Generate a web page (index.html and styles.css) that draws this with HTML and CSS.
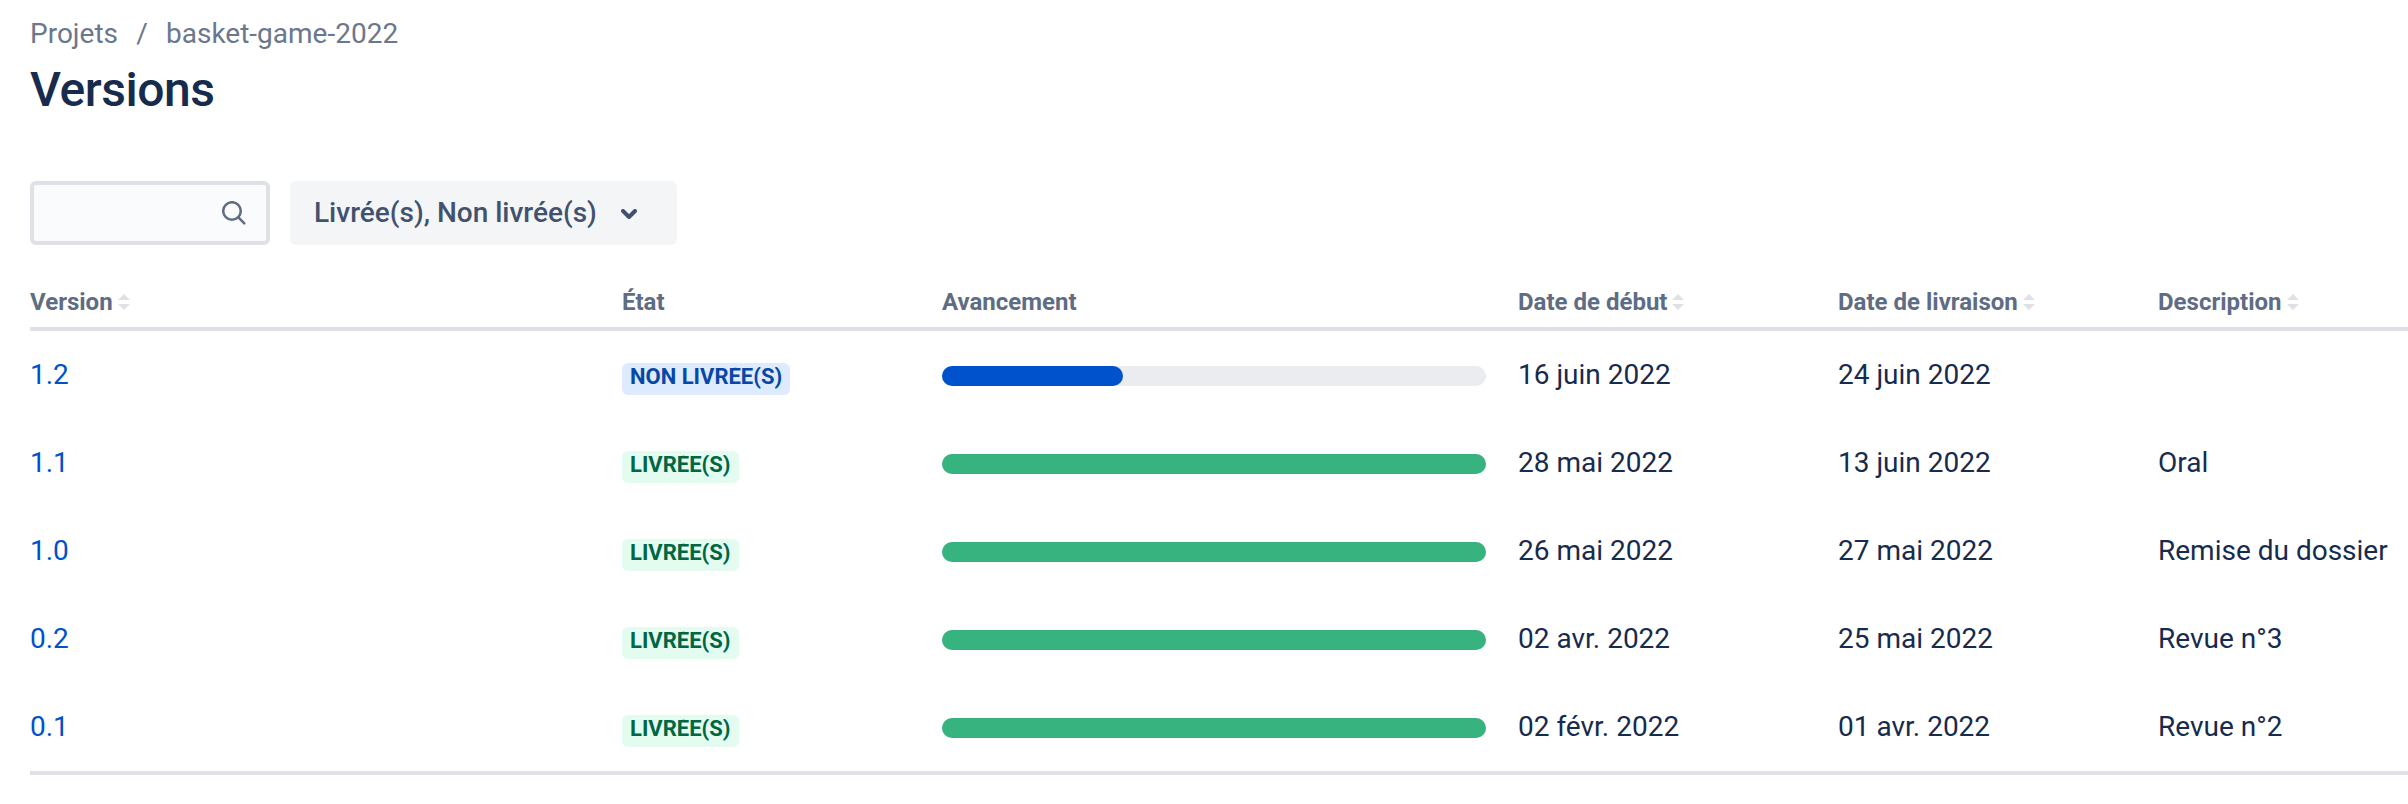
FILE: index.html
```html
<!DOCTYPE html>
<html lang="fr">
<head>
<meta charset="utf-8">
<title>Versions</title>
<link rel="stylesheet" href="styles.css">
</head>
<body>
<main class="page">
  <nav class="breadcrumbs"><span>Projets</span><span class="separator">/</span><span>basket-game-2022</span></nav>
  <h1 class="title">Versions</h1>
  <div class="filters">
    <div class="search">
      <svg class="search-icon" width="24" height="24" viewBox="0 0 24 24"><circle cx="10" cy="10" r="8.8" /><path d="M16.4 16.4 22.3 22.3" /></svg>
    </div>
    <div class="select"><span>Livrée(s), Non livrée(s)</span><svg class="chevron" width="16" height="10" viewBox="0 0 16 10"><path d="M2 2l6 6 6-6" /></svg></div>
  </div>
  <div class="table">
    <div class="row head">
      <div>Version<svg class="sort" width="12" height="16" viewBox="0 0 12 16"><path d="M0 6 6 0l6 6zM0 10h12l-6 6z" /></svg></div>
      <div>État</div>
      <div>Avancement</div>
      <div>Date de début<svg class="sort" width="12" height="16" viewBox="0 0 12 16"><path d="M0 6 6 0l6 6zM0 10h12l-6 6z" /></svg></div>
      <div>Date de livraison<svg class="sort" width="12" height="16" viewBox="0 0 12 16"><path d="M0 6 6 0l6 6zM0 10h12l-6 6z" /></svg></div>
      <div>Description<svg class="sort" width="12" height="16" viewBox="0 0 12 16"><path d="M0 6 6 0l6 6zM0 10h12l-6 6z" /></svg></div>
    </div>
    <div class="row">
      <div><span class="link">1.2</span></div>
      <div><span class="lozenge progress"><span class="lozenge-text">NON LIVRÉE(S)</span></span></div>
      <div><div class="track"><div class="bar current" style="width: 33.33%"></div></div></div>
      <div>16 juin 2022</div><div>24 juin 2022</div><div></div>
    </div>
    <div class="row">
      <div><span class="link">1.1</span></div>
      <div><span class="lozenge"><span class="lozenge-text">LIVRÉE(S)</span></span></div>
      <div><div class="track"><div class="bar" style="width: 100%"></div></div></div>
      <div>28 mai 2022</div><div>13 juin 2022</div><div>Oral</div>
    </div>
    <div class="row">
      <div><span class="link">1.0</span></div>
      <div><span class="lozenge"><span class="lozenge-text">LIVRÉE(S)</span></span></div>
      <div><div class="track"><div class="bar" style="width: 100%"></div></div></div>
      <div>26 mai 2022</div><div>27 mai 2022</div><div>Remise du dossier</div>
    </div>
    <div class="row">
      <div><span class="link">0.2</span></div>
      <div><span class="lozenge"><span class="lozenge-text">LIVRÉE(S)</span></span></div>
      <div><div class="track"><div class="bar" style="width: 100%"></div></div></div>
      <div>02 avr. 2022</div><div>25 mai 2022</div><div>Revue n°3</div>
    </div>
    <div class="row">
      <div><span class="link">0.1</span></div>
      <div><span class="lozenge"><span class="lozenge-text">LIVRÉE(S)</span></span></div>
      <div><div class="track"><div class="bar" style="width: 100%"></div></div></div>
      <div>02 févr. 2022</div><div>01 avr. 2022</div><div>Revue n°2</div>
    </div>
  </div>
</main>
</body>
</html>
```

FILE: styles.css
```css
* { box-sizing: border-box; }
body {
  margin: 0;
  background: #fff;
  color: #172b4d;
  font: 28px/40px Roboto, sans-serif;
  overflow: hidden;
}
.page { padding: 14px 0 0 30px; }
.breadcrumbs { display: flex; height: 40px; color: #6b778c; }
.separator { width: 48px; text-align: center; }
.title {
  margin: 8px 0 0;
  font-size: 48px;
  line-height: 56px;
  font-weight: 500;
  letter-spacing: -0.01em;
}
.filters { display: flex; gap: 20px; margin-top: 63px; }
.search {
  display: flex;
  align-items: center;
  justify-content: flex-end;
  width: 240px;
  height: 64px;
  padding-right: 20px;
  border: 4px solid #dfe1e6;
  border-radius: 6px;
  background: #fafbfc;
}
.search-icon { fill: none; stroke: #5e6c84; stroke-width: 2.5; stroke-linecap: round; }
.select {
  display: flex;
  align-items: center;
  justify-content: space-between;
  width: 387px;
  height: 64px;
  padding: 0 40px 0 24px;
  border-radius: 6px;
  background: #f4f5f7;
  color: #42526e;
  font-weight: 500;
}
.chevron { margin-top: 2px; fill: none; stroke: #42526e; stroke-width: 4; stroke-linecap: round; stroke-linejoin: round; }
.table { margin-top: 32px; border-bottom: 4px solid #dfe1e6; }
.row {
  display: grid;
  grid-template-columns: 592px 320px 576px 320px 320px 1fr;
  align-items: center;
  height: 88px;
  white-space: nowrap;
}
.head {
  height: 54px;
  border-bottom: 4px solid #dfe1e6;
  color: #5e6c84;
  font-size: 24px;
  font-weight: 700;
}
.sort { margin-left: 5px; fill: #dfe1e6; }
.link { color: #0052cc; }
.lozenge {
  display: block;
  width: max-content;
  height: 32px;
  margin-top: 8px;
  padding: 4px 0 6px;
  border-radius: 6px;
  background: #e3fcef;
  color: #006644;
  font-size: 22px;
  font-weight: 700;
  line-height: 20px;
}
.lozenge-text { display: block; height: 22px; padding: 0 8px; overflow: hidden; }
.lozenge.progress { background: #deebff; color: #0747a6; }
.track { width: 544px; height: 20px; margin-top: 2px; border-radius: 10px; background: #ebecf0; }
.bar { height: 20px; border-radius: 10px; background: #36b37e; }
.bar.current { background: #0052cc; }
```
